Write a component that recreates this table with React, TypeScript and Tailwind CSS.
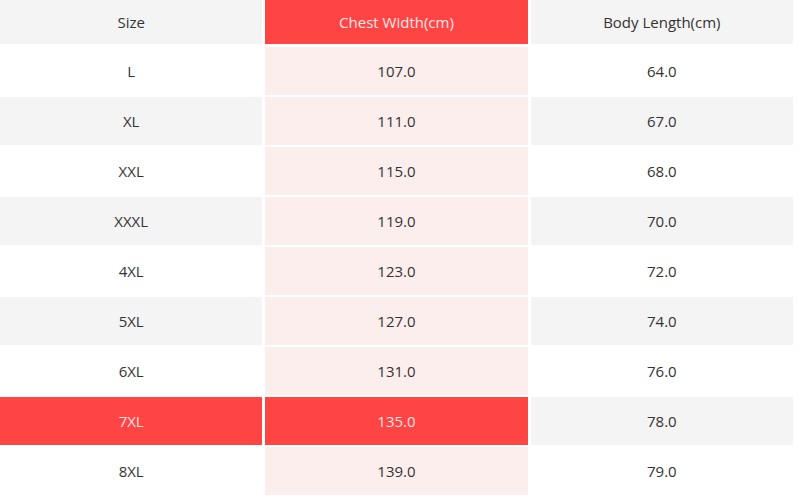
const rows = [
  { size: 'L', chest: '107.0', length: '64.0' },
  { size: 'XL', chest: '111.0', length: '67.0' },
  { size: 'XXL', chest: '115.0', length: '68.0' },
  { size: 'XXXL', chest: '119.0', length: '70.0' },
  { size: '4XL', chest: '123.0', length: '72.0' },
  { size: '5XL', chest: '127.0', length: '74.0' },
  { size: '6XL', chest: '131.0', length: '76.0' },
  { size: '7XL', chest: '135.0', length: '78.0', active: true },
  { size: '8XL', chest: '139.0', length: '79.0' },
];

const App = () => {
  return (
    <div className="w-[800px] h-[497px] overflow-hidden bg-white pr-[7px] font-['Open_Sans',sans-serif] text-[15px] text-[#333]">
      {/* Header */}
      <div className="grid grid-cols-3 gap-x-[3px] h-[44px]">
        <div className="flex items-center justify-center bg-[#f4f4f4]">Size</div>
        <div className="flex items-center justify-center bg-[#ff4444] text-[#ffe9e9]">Chest Width(cm)</div>
        <div className="flex items-center justify-center bg-[#f4f4f4]">Body Length(cm)</div>
      </div>

      {/* Rows */}
      <div className="mt-[3px] flex flex-col gap-y-[2px]">
        {rows.map((row, i) => {
          const striped = i % 2 === 1;
          return (
            <div key={row.size} className="grid grid-cols-3 gap-x-[3px] h-[48px]">
              <div
                className={
                  row.active
                    ? 'flex items-center justify-center bg-[#ff4444] text-[#ffe3e3]'
                    : striped
                      ? 'flex items-center justify-center bg-[#f4f4f4]'
                      : 'flex items-center justify-center bg-white'
                }
              >
                {row.size}
              </div>
              <div
                className={
                  row.active
                    ? 'flex items-center justify-center bg-[#ff4444] text-[#ffe3e3]'
                    : 'flex items-center justify-center bg-[#fdeeee]'
                }
              >
                {row.chest}
              </div>
              <div
                className={
                  striped
                    ? 'flex items-center justify-center bg-[#f4f4f4]'
                    : 'flex items-center justify-center bg-white'
                }
              >
                {row.length}
              </div>
            </div>
          );
        })}
      </div>
    </div>
  );
};

export default App;
